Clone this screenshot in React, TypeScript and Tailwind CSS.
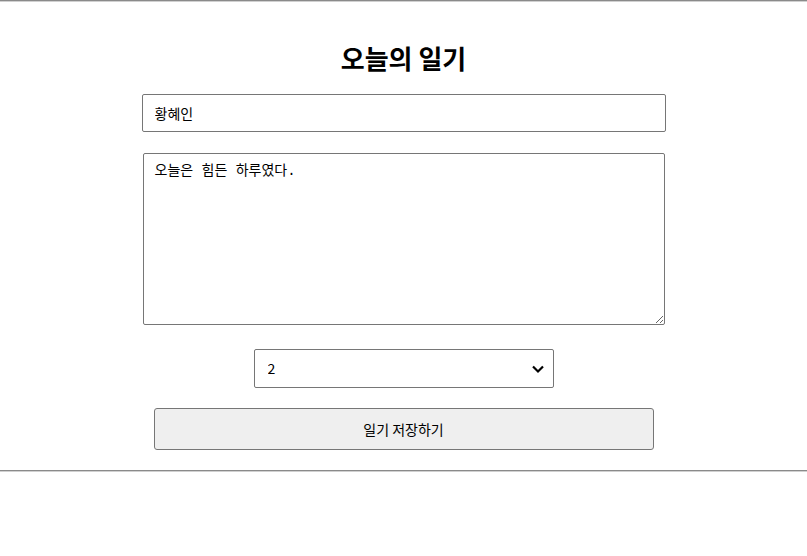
import React from 'react';

const sans = { fontFamily: '"Noto Sans CJK KR", "Noto Sans", sans-serif' };

const App: React.FC = () => {
  return (
    <div className="w-[807px] h-[556px] bg-white text-black font-['Liberation_Sans','Noto_Sans_CJK_KR',sans-serif]">
      <div className="h-[2px] border-t border-[#8a8a8a] border-b border-b-[#d0d0d0]"></div>

      <div className="flex flex-col items-center pt-[40px]">
        <h2 className="text-[26px] leading-[32px] font-bold font-['Noto_Sans_CJK_KR',sans-serif]">오늘의 일기</h2>

        <input
          defaultValue="황혜인"
          className="mt-[20px] w-[524px] h-[38px] border border-[#767676] rounded-[2px] px-[12px] text-[14px] outline-none font-['Noto_Sans_CJK_KR',sans-serif]"
        />

        <textarea
          defaultValue="오늘은 힘든 하루였다."
          className="mt-[21px] w-[522px] h-[172px] border border-[#767676] rounded-[2px] px-[11px] py-[8px] text-[14px] leading-[18px] outline-none font-['Liberation_Mono','Noto_Sans_CJK_KR',monospace]"
        />

        <div className="relative mt-[24px] w-[300px] h-[39px]">
          <select
            defaultValue="2"
            className="appearance-none w-full h-full border border-[#767676] rounded-[2px] pl-[13px] text-[14px] bg-white outline-none"
            style={sans}
          >
            <option value="1">1</option>
            <option value="2">2</option>
            <option value="3">3</option>
            <option value="4">4</option>
            <option value="5">5</option>
          </select>
          <svg
            className="absolute right-[9px] top-[13px] pointer-events-none"
            width="14"
            height="14"
            viewBox="0 0 14 14"
          >
            <path d="M2 4.5 L7 9.5 L12 4.5" fill="none" stroke="#000" strokeWidth="2.2" />
          </svg>
        </div>

        <button className="mt-[20px] w-[500px] h-[42px] bg-[#efefef] border border-[#767676] rounded-[3px] text-[14px]" style={sans}>
          일기 저장하기
        </button>
      </div>

      <div className="mt-[20px] h-[2px] border-t border-[#8a8a8a] border-b border-b-[#d0d0d0]"></div>
    </div>
  );
};

export default App;
